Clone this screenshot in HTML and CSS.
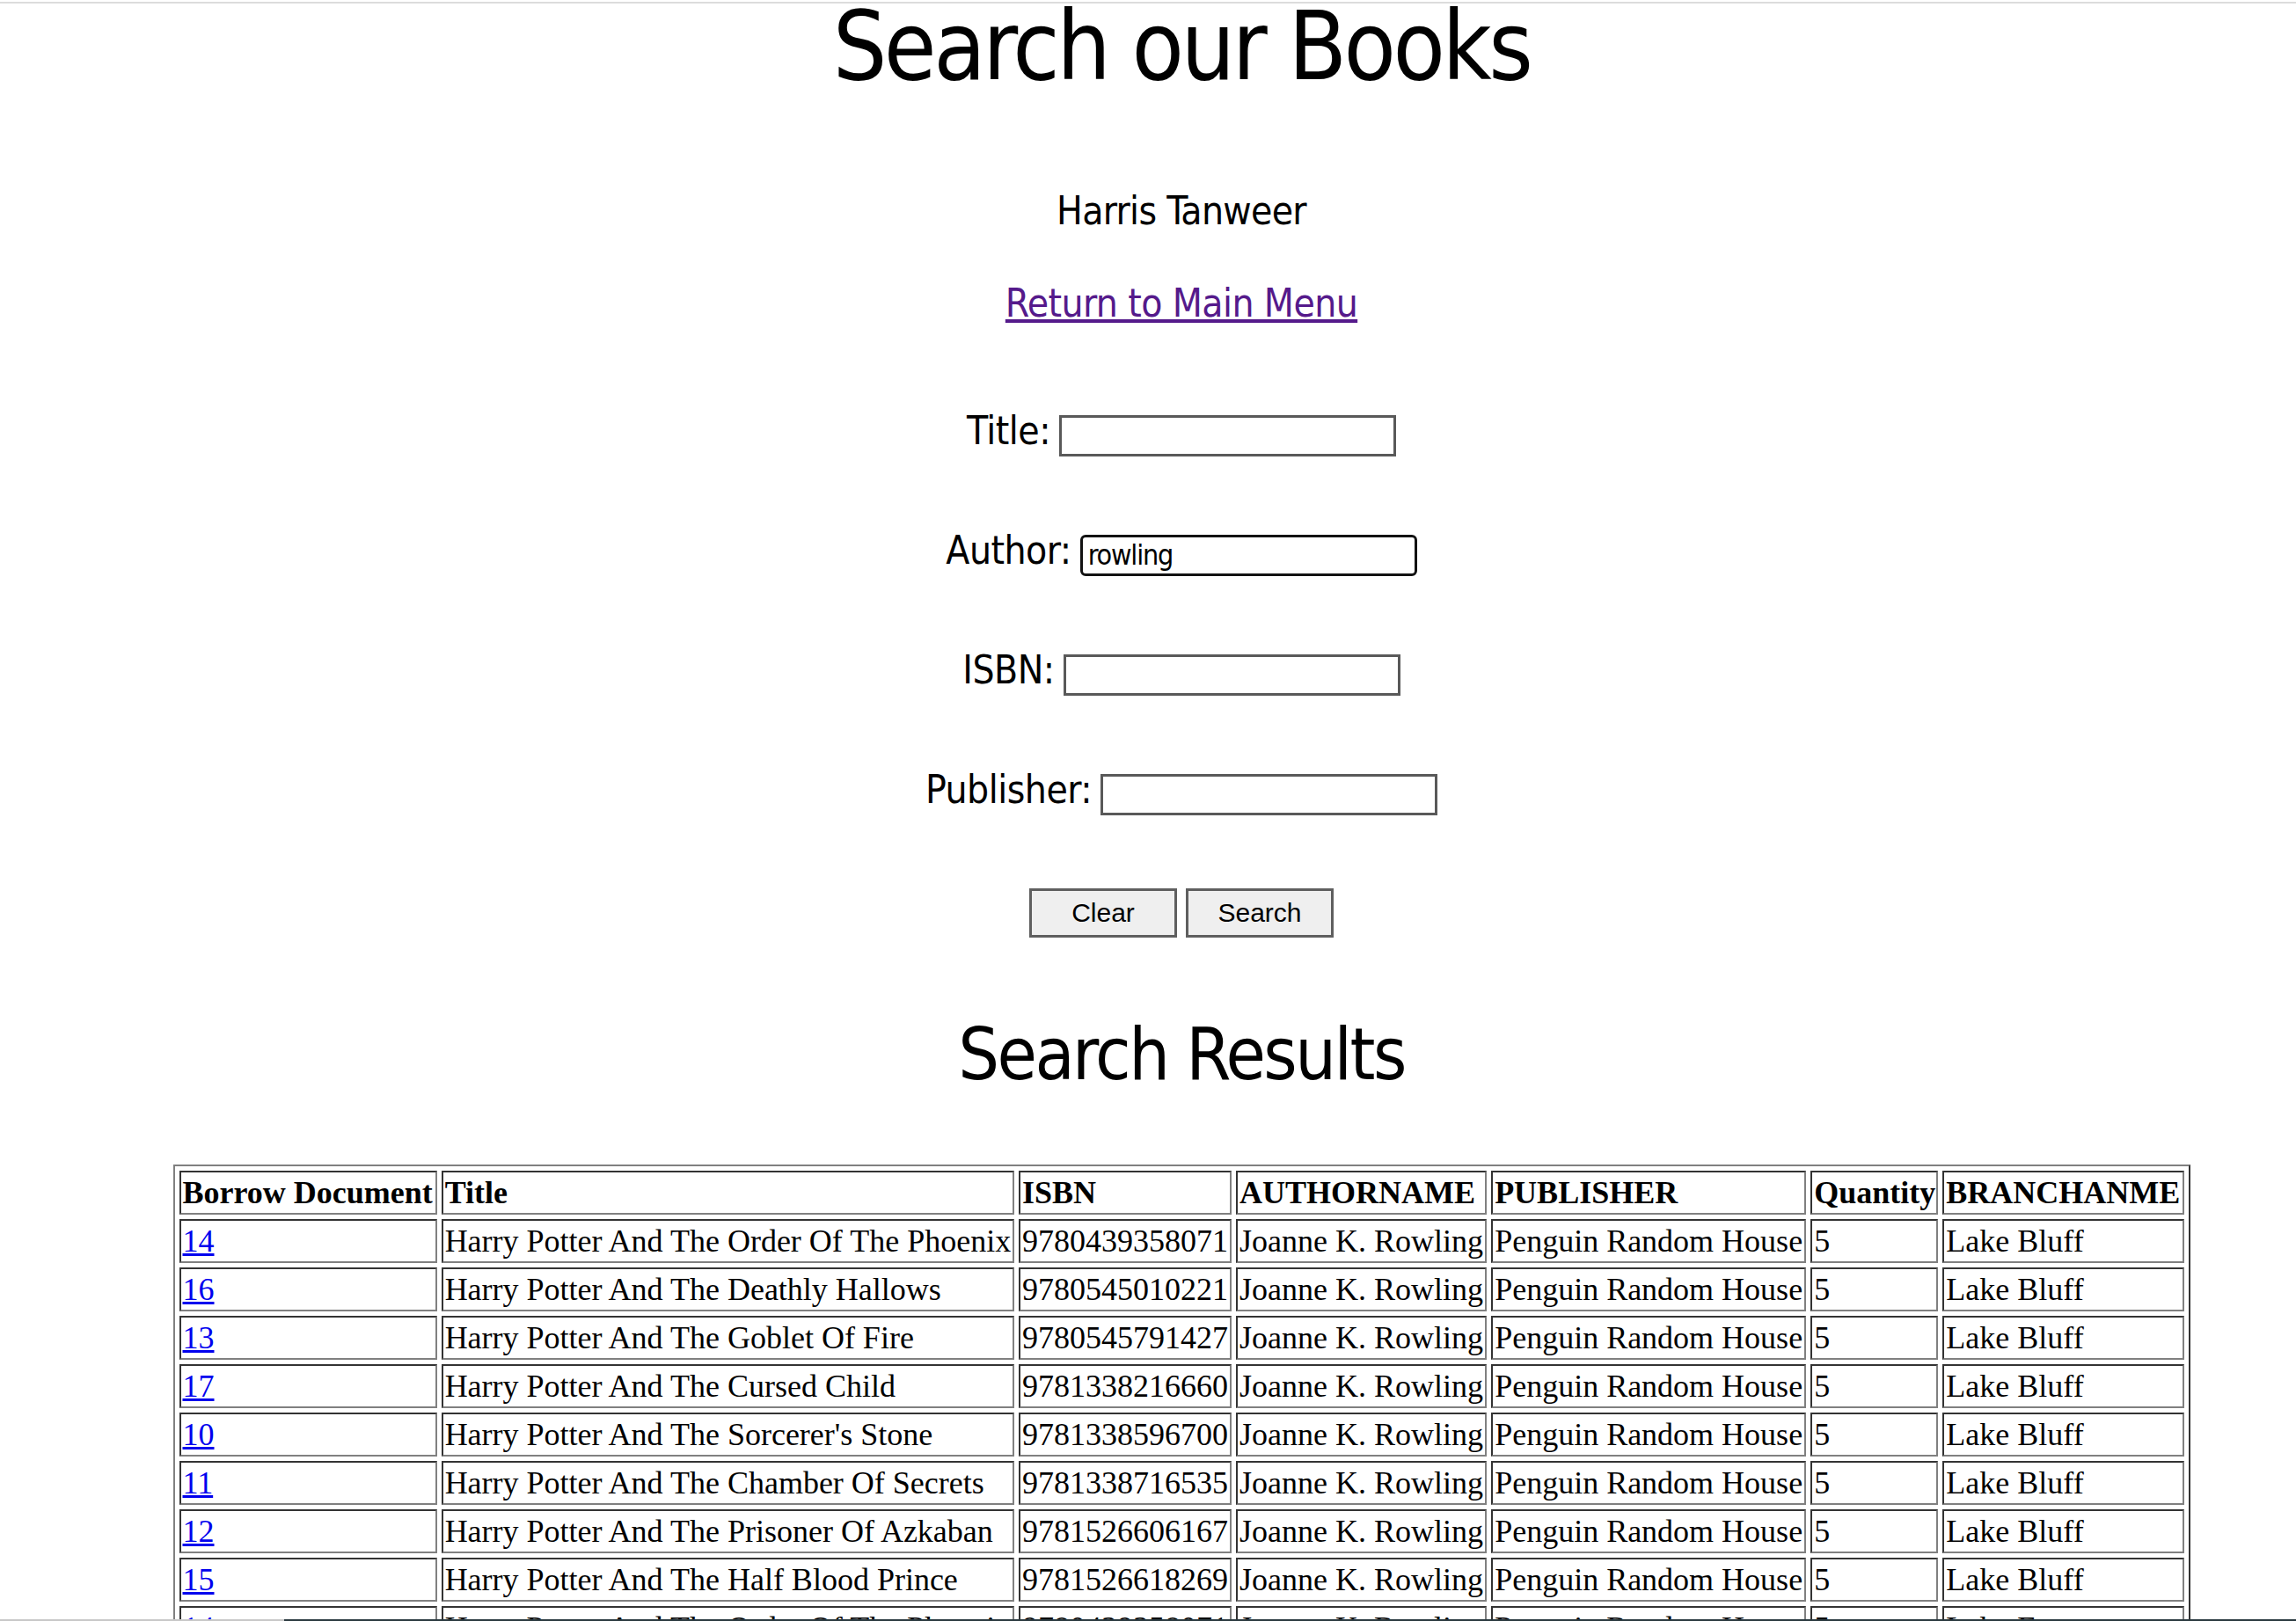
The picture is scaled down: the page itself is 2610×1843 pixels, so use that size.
FILE: index.html
```html
<!DOCTYPE html>
<html lang="en">
<head>
<meta charset="utf-8">
<title>Search our Books</title>
<link rel="stylesheet" href="styles.css">
</head>
<body>
<div class="topline"></div>
<div class="page">
  <h1 class="title">Search our Books</h1>
  <p class="user">Harris Tanweer</p>
  <p class="back"><a class="visited" href="#">Return to Main Menu</a></p>

  <form class="search-form">
    <div class="field"><label class="lbl" for="t">Title:</label><input class="box" id="t" type="text"></div>
    <div class="field"><label class="lbl" for="a">Author:</label><input class="box focused" id="a" type="text" value="rowling"></div>
    <div class="field"><label class="lbl" for="i">ISBN:</label><input class="box" id="i" type="text"></div>
    <div class="field"><label class="lbl" for="p">Publisher:</label><input class="box" id="p" type="text"></div>
    <div class="buttons"><button class="btn" type="button">Clear</button><button class="btn" type="button">Search</button></div>
  </form>

  <h2 class="results">Search Results</h2>

  <table class="books">
    <colgroup>
      <col class="c1"><col class="c2"><col class="c3"><col class="c4"><col class="c5"><col class="c6"><col class="c7">
    </colgroup>
    <tr><th>Borrow Document</th><th>Title</th><th>ISBN</th><th>AUTHORNAME</th><th>PUBLISHER</th><th>Quantity</th><th>BRANCHANME</th></tr>
    <tr><td><a href="#">14</a></td><td>Harry Potter And The Order Of The Phoenix</td><td>9780439358071</td><td>Joanne K. Rowling</td><td>Penguin Random House</td><td>5</td><td>Lake Bluff</td></tr>
    <tr><td><a href="#">16</a></td><td>Harry Potter And The Deathly Hallows</td><td>9780545010221</td><td>Joanne K. Rowling</td><td>Penguin Random House</td><td>5</td><td>Lake Bluff</td></tr>
    <tr><td><a href="#">13</a></td><td>Harry Potter And The Goblet Of Fire</td><td>9780545791427</td><td>Joanne K. Rowling</td><td>Penguin Random House</td><td>5</td><td>Lake Bluff</td></tr>
    <tr><td><a href="#">17</a></td><td>Harry Potter And The Cursed Child</td><td>9781338216660</td><td>Joanne K. Rowling</td><td>Penguin Random House</td><td>5</td><td>Lake Bluff</td></tr>
    <tr><td><a href="#">10</a></td><td>Harry Potter And The Sorcerer's Stone</td><td>9781338596700</td><td>Joanne K. Rowling</td><td>Penguin Random House</td><td>5</td><td>Lake Bluff</td></tr>
    <tr><td><a href="#">11</a></td><td>Harry Potter And The Chamber Of Secrets</td><td>9781338716535</td><td>Joanne K. Rowling</td><td>Penguin Random House</td><td>5</td><td>Lake Bluff</td></tr>
    <tr><td><a href="#">12</a></td><td>Harry Potter And The Prisoner Of Azkaban</td><td>9781526606167</td><td>Joanne K. Rowling</td><td>Penguin Random House</td><td>5</td><td>Lake Bluff</td></tr>
    <tr><td><a href="#">15</a></td><td>Harry Potter And The Half Blood Prince</td><td>9781526618269</td><td>Joanne K. Rowling</td><td>Penguin Random House</td><td>5</td><td>Lake Bluff</td></tr>
    <tr><td><a href="#">14</a></td><td>Harry Potter And The Order Of The Phoenix</td><td>9780439358071</td><td>Joanne K. Rowling</td><td>Penguin Random House</td><td>5</td><td>Lake Forest</td></tr>
  </table>
</div>
<div class="bottomline"><span class="bl-left"></span><span class="bl-right"></span></div>
</body>
</html>
```
FILE: styles.css
```css
html, body {
  margin: 0;
  padding: 0;
  background: #ffffff;
}
body {
  font-family: "DejaVu Sans", sans-serif;
  font-stretch: condensed;
  color: #000;
  overflow: hidden;
}
.topline {
  position: fixed;
  top: 2px;
  left: 0;
  right: 0;
  height: 2px;
  background: #dcdcdc;
}
.bottomline {
  position: fixed;
  left: 0;
  right: 0;
  bottom: 0;
  height: 2px;
  display: flex;
}
.bl-left { width: 323px; background: #c8c8c8; }
.bl-right { flex: 1; background: #2b3a40; }

.page {
  margin-left: 76px;
  text-align: center;
}
.title {
  margin: 3px 0 0;
  font-size: 108px;
  font-weight: normal;
  line-height: 100px;
  letter-spacing: -3.5px;
}
.user {
  margin: 109px 0 0;
  font-size: 44px;
  line-height: 56px;
  letter-spacing: -0.7px;
}
.back {
  margin: 49px 0 0;
  font-size: 44px;
  line-height: 56px;
  letter-spacing: -0.6px;
}
.visited {
  color: #551a8b;
  text-decoration: underline;
}
.search-form {
  margin: 98px 0 0;
  display: flex;
  flex-direction: column;
  align-items: center;
  gap: 88px;
}
.field {
  display: flex;
  align-items: center;
  justify-content: center;
  gap: 10px;
  height: 48px;
}
.lbl {
  font-size: 44px;
  line-height: 48px;
  letter-spacing: -0.5px;
  padding-bottom: 10px;
}
.box {
  box-sizing: border-box;
  width: 383px;
  height: 47px;
  border: 3px solid #595959;
  border-radius: 0;
  padding: 0 6px;
  font-family: "DejaVu Sans", sans-serif;
  font-stretch: condensed;
  font-size: 32px;
  letter-spacing: -1.2px;
  color: #000;
  background: #fff;
  outline: none;
}
.box.focused {
  border-color: #121212;
  border-radius: 6px;
}
.buttons {
  display: flex;
  gap: 10px;
  justify-content: center;
  margin-top: -5px;
}
.btn {
  box-sizing: border-box;
  width: 168px;
  height: 56px;
  border: 3px solid #5f5f5f;
  background: #efefef;
  font-family: "Liberation Sans", Arial, sans-serif;
  font-stretch: normal;
  font-size: 30px;
  color: #000;
  padding: 0;
}
.results {
  margin: 83px 0 0;
  font-size: 82px;
  font-weight: normal;
  line-height: 100px;
  letter-spacing: -2.5px;
}
.books {
  margin: 75px auto 0;
  width: 2293px;
  table-layout: fixed;
  border-collapse: separate;
  border-spacing: 5px;
  border: 2px solid;
  border-color: #808080 #333333 #333333 #808080;
  font-family: "Liberation Serif", "Times New Roman", serif;
  font-stretch: normal;
  font-size: 36px;
  letter-spacing: 0;
  text-align: left;
}
.c1 { width: 293px; }
.c2 { width: 651px; }
.c3 { width: 242px; }
.c4 { width: 285px; }
.c5 { width: 358px; }
.c6 { width: 145px; }
.c7 { width: 274px; }
.books th,
.books td {
  border: 2px solid;
  border-color: #333333 #808080 #808080 #333333;
  padding: 2px;
  line-height: 42px;
  white-space: nowrap;
  overflow: hidden;
  vertical-align: middle;
}
.books th {
  font-weight: bold;
}
.books a {
  color: #0000ee;
  text-decoration: underline;
}
```
